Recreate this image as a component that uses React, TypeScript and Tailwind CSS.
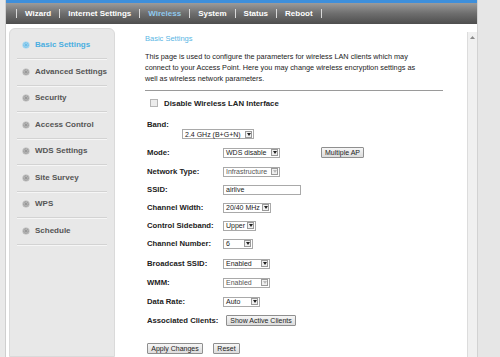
import React from 'react';

const NAV = ['Wizard', 'Internet Settings', 'Wireless', 'System', 'Status', 'Reboot'];
const MENU = [
  'Basic Settings',
  'Advanced Settings',
  'Security',
  'Access Control',
  'WDS Settings',
  'Site Survey',
  'WPS',
  'Schedule',
];

const Bullet: React.FC<{ active?: boolean }> = ({ active }) => (
  <svg width="8" height="8" viewBox="0 0 8 8" className="shrink-0">
    <circle cx="4" cy="4" r="3.6" fill={active ? '#9fd4f0' : '#b9b9b9'} />
    <circle cx="4" cy="4" r="2.2" fill="none" stroke={active ? '#5ab4e2' : '#8a8a8a'} strokeWidth="0.8" strokeDasharray="1 0.7" />
    <circle cx="4" cy="4" r="0.9" fill={active ? '#5ab4e2' : '#8a8a8a'} />
  </svg>
);

const Select: React.FC<{ value: string; w: string; disabled?: boolean }> = ({ value, w, disabled }) => (
  <div className={`${w} h-[10px] flex items-center justify-between border border-[#a9a9a9] bg-white pl-[2px] pr-[1px]`}>
    <span className={`text-[7px] leading-none ${disabled ? 'text-[#555]' : 'text-[#222]'}`}>{value}</span>
    <span className="w-[7px] h-[7px] flex items-center justify-center border border-[#9a9a9a] bg-[#f0f0f0]">
      <svg width="4" height="3" viewBox="0 0 4 3">
        <path d="M0 0 L4 0 L2 3 Z" fill={disabled ? '#bbb' : '#222'} />
      </svg>
    </span>
  </div>
);

const Btn: React.FC<{ children: React.ReactNode; w: string }> = ({ children, w }) => (
  <div className={`${w} h-[11px] flex items-center justify-center border border-[#8f8f8f] rounded-[1px] bg-gradient-to-b from-[#f6f6f6] to-[#dcdcdc] text-[7px] leading-none text-[#222]`}>
    {children}
  </div>
);

const Row: React.FC<{ label: string; h: string; children: React.ReactNode }> = ({ label, h, children }) => (
  <div className={`flex items-center ${h}`}>
    <div className="w-[76px] text-[7.7px] font-bold text-[#222] leading-none">{label}</div>
    {children}
  </div>
);

export default function App() {
  return (
    <div className="w-[500px] h-[357px] overflow-hidden flex bg-white" style={{ fontFamily: '"Liberation Sans", Arial, sans-serif' }}>
      <div className="w-[6px] bg-[#e9e9e9] border-r border-[#cfcfcf]" />

      <div className="w-[471px] flex flex-col">
        <div className="h-[3px] bg-[#3e8fdb]" />
        <div className="h-[21px] bg-gradient-to-b from-[#9b9b9b] via-[#6e6e6e] to-[#4e4e4e] flex items-center pl-[10px] text-[8px] font-bold text-white">
          {NAV.map((n) => (
            <React.Fragment key={n}>
              <span className="w-px h-[9px] bg-[#d8d8d8]" />
              <span className={`px-[8px] ${n === 'Wireless' ? 'text-[#8fc9ee]' : ''}`}>{n}</span>
            </React.Fragment>
          ))}
          <span className="w-px h-[9px] bg-[#d8d8d8]" />
        </div>

        <div className="flex-1 flex">
          <div className="w-[109px] pl-[3px] pt-[4px]">
            <div className="h-full rounded-t-[6px] bg-[#e8e8e8] border border-[#dadada] pt-[3.5px] px-[7px]">
              {MENU.map((m, i) => (
                <div key={m} className="h-[26.5px] flex items-center gap-[5px] pl-[5px] border-b border-[#d3d3d3] shadow-[0_1px_0_#f6f6f6]">
                  <Bullet active={i === 0} />
                  <span className={`text-[8px] font-bold ${i === 0 ? 'text-[#4aaee0]' : 'text-[#555]'}`}>{m}</span>
                </div>
              ))}
            </div>
          </div>

          <div className="flex-1 pl-[30px] pt-[11px]">
            <div className="text-[7.5px] text-[#5ab6e4] leading-none">Basic Settings</div>
            <p className="mt-[8px] w-[274px] text-[7.3px] leading-[11px] text-[#222]">
              This page is used to configure the parameters for wireless LAN clients which may connect to your Access Point. Here you may change wireless encryption settings as well as wireless network parameters.
            </p>
            <div className="mt-[6px] w-[298px] h-px bg-[#9a9a9a]" />

            <div className="mt-[7px] pl-[5px] flex items-center gap-[6px]">
              <span className="w-[8px] h-[8px] border border-[#b5b5b5] bg-[#ececec]" />
              <span className="text-[7.8px] font-bold text-[#222]">Disable Wireless LAN Interface</span>
            </div>

            <div className="pl-[2px] mt-[12px]">
              <div className="flex items-start h-[19px]">
                <div className="w-[35px] text-[7.7px] font-bold text-[#222] leading-none">Band:</div>
                <div className="mt-[8px]"><Select value="2.4 GHz (B+G+N)" w="w-[72px]" /></div>
              </div>
              <div className="h-[3px]" />
              <Row label="Mode:" h="h-[19px]">
                <Select value="WDS disable" w="w-[57px]" />
                <div className="ml-[41px]"><Btn w="w-[43px]">Multiple AP</Btn></div>
              </Row>
              <Row label="Network Type:" h="h-[19px]"><Select value="Infrastructure" w="w-[57px]" disabled /></Row>
              <Row label="SSID:" h="h-[17px]">
                <div className="w-[78px] h-[10px] border border-[#a9a9a9] bg-white pl-[2px] flex items-center text-[7px] leading-none text-[#222]">airlive</div>
              </Row>
              <Row label="Channel Width:" h="h-[19px]"><Select value="20/40 MHz" w="w-[48px]" /></Row>
              <Row label="Control Sideband:" h="h-[17px]"><Select value="Upper" w="w-[33px]" /></Row>
              <Row label="Channel Number:" h="h-[19px]"><Select value="6" w="w-[30px]" /></Row>
              <Row label="Broadcast SSID:" h="h-[21px]"><Select value="Enabled" w="w-[47px]" /></Row>
              <Row label="WMM:" h="h-[17px]"><Select value="Enabled" w="w-[47px]" disabled /></Row>
              <Row label="Data Rate:" h="h-[21px]"><Select value="Auto" w="w-[37px]" /></Row>
              <Row label="Associated Clients:" h="h-[17px]">
                <div className="ml-[3px]"><Btn w="w-[70px]">Show Active Clients</Btn></div>
              </Row>
              <div className="mt-[14px] flex gap-[10px]">
                <Btn w="w-[56px]">Apply Changes</Btn>
                <Btn w="w-[27px]">Reset</Btn>
              </div>
            </div>
          </div>

          <div className="w-[10px] mt-[8px] bg-[#f0f0f0] border-l border-[#dcdcdc] flex justify-center pt-[4px]">
            <svg width="5" height="3" viewBox="0 0 5 3"><path d="M0 3 L5 3 L2.5 0 Z" fill="#8a8a8a" /></svg>
          </div>
        </div>
      </div>

      <div className="flex-1 bg-[#e6e6e6] border-l border-[#d2d2d2]" />
    </div>
  );
}
